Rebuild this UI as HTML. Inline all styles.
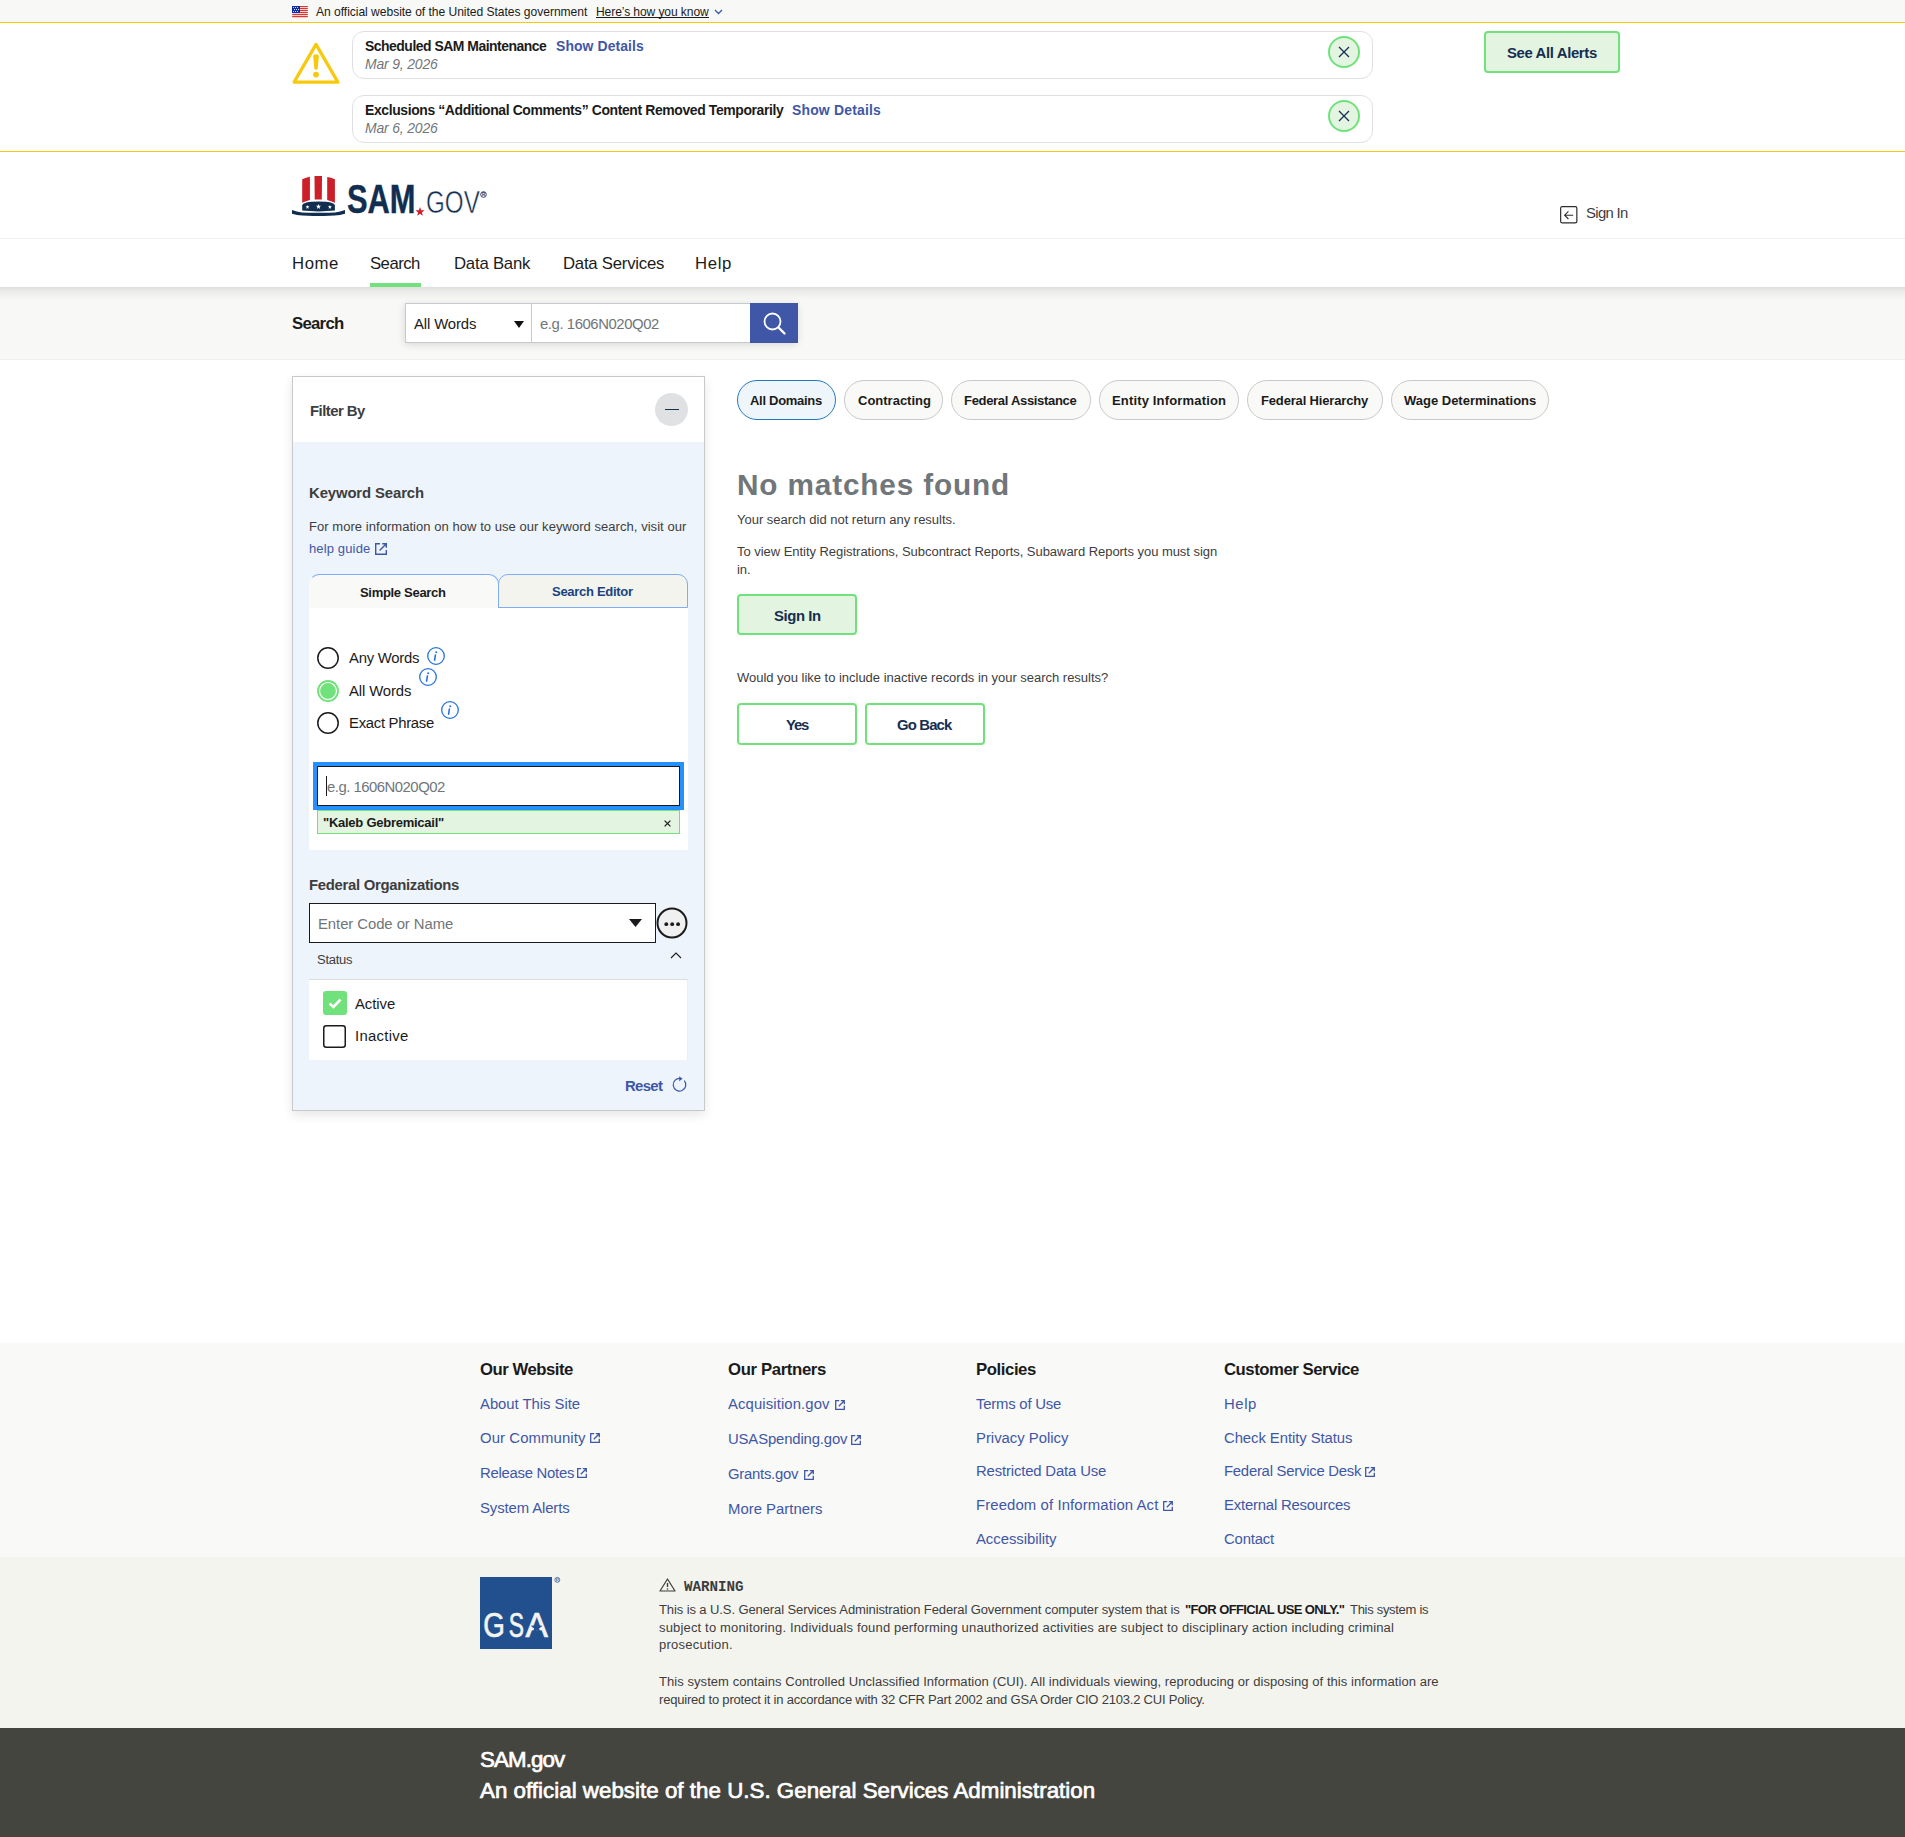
<!DOCTYPE html>
<html><head><meta charset="utf-8"><title>SAM.gov Search</title>
<style>
html,body{margin:0;padding:0;}
body{width:1905px;height:1837px;position:relative;overflow:hidden;background:#fff;font-family:'Liberation Sans', sans-serif;}
span{position:absolute;white-space:nowrap;}
svg{overflow:visible}
</style></head><body>
<div style="position:absolute;left:0px;top:0px;width:1905px;height:22px;background:#f8f8f6"></div>
<div style="position:absolute;left:0px;top:22px;width:1905px;height:1px;background:#f7c90c"></div>
<div style="position:absolute;left:0px;top:151px;width:1905px;height:1px;background:#f7c90c"></div>
<div style="position:absolute;left:0px;top:238px;width:1905px;height:1px;background:#f0f0ec"></div>
<div style="position:absolute;left:0px;top:287px;width:1905px;height:73px;background:linear-gradient(#dededc 0px,#ebebe9 4px,#f8f8f6 13px)"></div>
<div style="position:absolute;left:0px;top:359px;width:1905px;height:1px;background:#f0f0ec"></div>
<div style="position:absolute;left:0px;top:1343px;width:1905px;height:214px;background:#f9f9f7"></div>
<div style="position:absolute;left:0px;top:1557px;width:1905px;height:171px;background:#f4f4ef"></div>
<div style="position:absolute;left:0px;top:1728px;width:1905px;height:109px;background:#454540"></div>
<svg style="position:absolute;left:292px;top:6px;" width="16" height="11" viewBox="0 0 16 11"><rect width="16" height="11" fill="#fff"/><rect x="0" y="0" width="16" height="1.2" fill="#d83933" rx="0.6"/><rect x="0" y="2" width="16" height="1.2" fill="#d83933" rx="0.6"/><rect x="0" y="4" width="16" height="1.2" fill="#d83933" rx="0.6"/><rect x="0" y="6" width="16" height="1.2" fill="#d83933" rx="0.6"/><rect x="0" y="8" width="16" height="1.2" fill="#d83933" rx="0.6"/><rect x="0" y="10" width="16" height="1.2" fill="#d83933" rx="0.6"/><rect x="0" y="0" width="8" height="7" fill="#0b2bab"/><circle cx="1.5" cy="1.5" r="0.55" fill="#fff"/><circle cx="3.5" cy="1.5" r="0.55" fill="#fff"/><circle cx="5.5" cy="1.5" r="0.55" fill="#fff"/><circle cx="2.5" cy="3.5" r="0.55" fill="#fff"/><circle cx="4.5" cy="3.5" r="0.55" fill="#fff"/><circle cx="6.5" cy="3.5" r="0.55" fill="#fff"/><circle cx="1.5" cy="5.5" r="0.55" fill="#fff"/><circle cx="3.5" cy="5.5" r="0.55" fill="#fff"/><circle cx="5.5" cy="5.5" r="0.55" fill="#fff"/></svg>
<div style="position:absolute;left:596px;top:17px;width:113px;height:1px;background:#1b1b1b"></div>
<svg style="position:absolute;left:714px;top:9px;" width="9" height="6" viewBox="0 0 9 6"><path d="M1 1 L4.5 4.5 L8 1" fill="none" stroke="#2f5db3" stroke-width="1.3"/></svg>
<svg style="position:absolute;left:292px;top:42px;" width="48" height="42" viewBox="0 0 48 42"><path d="M24 2.4 L45.9 40.1 L2.1 40.1 Z" fill="none" stroke="#f7c90c" stroke-width="3.2" stroke-linejoin="round"/><path d="M21.2 14.6 Q21.2 12.2 24 12.2 Q26.8 12.2 26.8 14.6 L25.7 26.6 Q25.5 27.8 24 27.8 Q22.5 27.8 22.3 26.6 Z" fill="#f7c90c"/><circle cx="24" cy="32.6" r="2.9" fill="#f7c90c"/></svg>
<div style="position:absolute;left:352px;top:31px;width:1019px;height:46px;border:1px solid #e0e0e0;border-radius:12px;background:#fff"></div>
<div style="position:absolute;left:1328px;top:36px;width:28px;height:28px;border:2px solid #70e17b;border-radius:50%;background:#e3f5e1"></div>
<svg style="position:absolute;left:1338px;top:46px;" width="12" height="12" viewBox="0 0 12 12"><path d="M1 1 L11 11 M11 1 L1 11" stroke="#162e51" stroke-width="1.3"/></svg>
<div style="position:absolute;left:352px;top:95px;width:1019px;height:46px;border:1px solid #e0e0e0;border-radius:12px;background:#fff"></div>
<div style="position:absolute;left:1328px;top:100px;width:28px;height:28px;border:2px solid #70e17b;border-radius:50%;background:#e3f5e1"></div>
<svg style="position:absolute;left:1338px;top:110px;" width="12" height="12" viewBox="0 0 12 12"><path d="M1 1 L11 11 M11 1 L1 11" stroke="#162e51" stroke-width="1.3"/></svg>
<div style="position:absolute;left:1484px;top:31px;width:132px;height:38px;border:2px solid #70e17b;border-radius:4px;background:#e3f5e1"></div>
<svg style="position:absolute;left:288px;top:170px;" width="72" height="52" viewBox="0 0 72 52">
<path d="M14.2 9.2 Q18 7.5 21.9 6.8 L21.9 30 Q18 31 14.2 32.7 Z" fill="#cd1f2a"/>
<path d="M26.5 5.9 L34 5.9 L33.8 29.6 Q30.2 29.2 26.7 29.6 Z" fill="#cd1f2a"/>
<path d="M39.2 7 Q43 7.5 46.9 9.2 L46.9 32.7 Q43 31 39.2 30 Z" fill="#cd1f2a"/>
<path d="M14.2 35.6 Q14.5 31.4 30.5 31.4 Q46.6 31.4 46.9 35.6 L46.9 40.6 Q30.5 42.2 14.2 40.6 Z" fill="#112e51"/>
<path d="M4 39.9 C12 43.3, 22 42.8, 30.5 42.8 C39 42.8, 49 43.3, 57 39.9 L57 43.8 C49 46.2, 39 45.9, 30.5 45.9 C22 45.9, 12 46.2, 4 43.8 Z" fill="#112e51"/>
<path d="M19.50 34.90 L20.02 36.29 L21.50 36.35 L20.34 37.27 L20.73 38.70 L19.50 37.88 L18.27 38.70 L18.66 37.27 L17.50 36.35 L18.98 36.29 Z" fill="#fff"/><path d="M30.50 34.00 L31.17 35.78 L33.07 35.87 L31.58 37.05 L32.09 38.88 L30.50 37.83 L28.91 38.88 L29.42 37.05 L27.93 35.87 L29.83 35.78 Z" fill="#fff"/><path d="M41.90 34.90 L42.42 36.29 L43.90 36.35 L42.74 37.27 L43.13 38.70 L41.90 37.88 L40.67 38.70 L41.06 37.27 L39.90 36.35 L41.38 36.29 Z" fill="#fff"/></svg>
<svg style="position:absolute;left:415px;top:207px;" width="10" height="9" viewBox="0 0 10 9"><path d="M5.00 0.00 L6.18 3.17 L9.57 3.32 L6.92 5.42 L7.82 8.68 L5.00 6.82 L2.18 8.68 L3.08 5.42 L0.43 3.32 L3.82 3.17 Z" fill="#d0202f"/></svg>
<svg style="position:absolute;left:480px;top:191px;" width="8" height="8" viewBox="0 0 8 8"><circle cx="3.5" cy="3.5" r="2.8" fill="none" stroke="#112e51" stroke-width="0.9"/><text x="3.5" y="5.2" font-size="4.5" font-family="Liberation Sans" font-weight="700" text-anchor="middle" fill="#112e51">R</text></svg>
<svg style="position:absolute;left:1560px;top:206px;" width="18" height="18" viewBox="0 0 18 18"><rect x="0.65" y="0.65" width="16.2" height="16.2" rx="1.6" fill="none" stroke="#2d2d2d" stroke-width="1.2"/><path d="M13.2 9.2 L4.6 9.2 M8.4 5.4 L4.6 9.2 L8.4 13" fill="none" stroke="#2d2d2d" stroke-width="1.1"/></svg>
<div style="position:absolute;left:370px;top:283px;width:51px;height:4px;background:#70e17b"></div>
<div style="position:absolute;left:405px;top:303px;width:392px;height:39px;box-shadow:0 2px 8px rgba(0,0,0,0.15)"></div>
<div style="position:absolute;left:405px;top:303px;width:125px;height:38px;background:#fff;border:1px solid #c6cace"></div>
<svg style="position:absolute;left:514px;top:321px;" width="10" height="7" viewBox="0 0 10 7"><path d="M0 0 L10 0 L5 7 Z" fill="#111"/></svg>
<div style="position:absolute;left:532px;top:303px;width:218px;height:38px;background:#fff;border:1px solid #c6cace;border-left:none"></div>
<div style="position:absolute;left:750px;top:303px;width:48px;height:40px;background:#3f57a6"></div>
<svg style="position:absolute;left:760px;top:310px;" width="28" height="28" viewBox="0 0 28 28"><circle cx="12.5" cy="11.5" r="8" fill="none" stroke="#fff" stroke-width="1.8"/><path d="M18.5 17.5 L24.5 23.5" stroke="#fff" stroke-width="2.4" stroke-linecap="round"/></svg>
<div style="position:absolute;left:292px;top:376px;width:411px;height:733px;border:1px solid #c9c9c9;background:#edf4fb;box-shadow:0 4px 10px rgba(0,0,0,0.10)"></div>
<div style="position:absolute;left:293px;top:377px;width:411px;height:65px;background:#fff"></div>
<div style="position:absolute;left:655px;top:393px;width:33px;height:33px;border-radius:50%;background:#dfe1e2"></div>
<div style="position:absolute;left:665px;top:409px;width:14px;height:1.4px;background:#162e51"></div>
<svg style="position:absolute;left:375px;top:543px;" width="12" height="12" viewBox="0 0 12 12"><path d="M5.0 0.7 L0.7 0.7 L0.7 11.3 L11.3 11.3 L11.3 7.0" fill="none" stroke="#3f57a6" stroke-width="1.4"/><path d="M4.6 7.4 L11.3 0.7 M7.2 0.7 L11.3 0.7 L11.3 4.8" fill="none" stroke="#3f57a6" stroke-width="1.4"/></svg>
<div style="position:absolute;left:309px;top:574px;width:190px;height:34px;background:#f9f9f7;border:1px solid #7fadf7;border-left-color:transparent;border-bottom:none;border-radius:10px 10px 0 0;box-sizing:border-box"></div>
<div style="position:absolute;left:498px;top:574px;width:190px;height:34px;background:#f3f4ee;border:1px solid #7fadf7;border-radius:10px 10px 0 0;box-sizing:border-box"></div>
<div style="position:absolute;left:309px;top:608px;width:379px;height:242px;background:#fff"></div>
<svg style="position:absolute;left:317px;top:647px;" width="22" height="22" viewBox="0 0 22 22"><circle cx="11" cy="11" r="10.2" fill="#fff" stroke="#1b1b1b" stroke-width="1.5"/></svg>
<svg style="position:absolute;left:317px;top:680px;" width="22" height="22" viewBox="0 0 22 22"><circle cx="11" cy="11" r="10.2" fill="#70e17b" stroke="#70e17b" stroke-width="1.5"/><circle cx="11" cy="11" r="8.5" fill="none" stroke="#fff" stroke-width="1.2"/></svg>
<svg style="position:absolute;left:317px;top:712px;" width="22" height="22" viewBox="0 0 22 22"><circle cx="11" cy="11" r="10.2" fill="#fff" stroke="#1b1b1b" stroke-width="1.5"/></svg>
<svg style="position:absolute;left:427px;top:647px;" width="18" height="18" viewBox="0 0 18 18"><circle cx="9" cy="9" r="8.3" fill="none" stroke="#2672de" stroke-width="1.3"/><path d="M8.4 8 L7.6 13.2" stroke="#2672de" stroke-width="1.6" stroke-linecap="round"/><circle cx="9.2" cy="5.2" r="1" fill="#2672de"/></svg>
<svg style="position:absolute;left:419px;top:668px;" width="18" height="18" viewBox="0 0 18 18"><circle cx="9" cy="9" r="8.3" fill="none" stroke="#2672de" stroke-width="1.3"/><path d="M8.4 8 L7.6 13.2" stroke="#2672de" stroke-width="1.6" stroke-linecap="round"/><circle cx="9.2" cy="5.2" r="1" fill="#2672de"/></svg>
<svg style="position:absolute;left:441px;top:701px;" width="18" height="18" viewBox="0 0 18 18"><circle cx="9" cy="9" r="8.3" fill="none" stroke="#2672de" stroke-width="1.3"/><path d="M8.4 8 L7.6 13.2" stroke="#2672de" stroke-width="1.6" stroke-linecap="round"/><circle cx="9.2" cy="5.2" r="1" fill="#2672de"/></svg>
<div style="position:absolute;left:313px;top:762px;width:371px;height:48px;background:#2491ff"></div>
<div style="position:absolute;left:317px;top:766px;width:363px;height:40px;background:#fff;border:1px solid #1b1b1b;box-sizing:border-box"></div>
<div style="position:absolute;left:326px;top:776px;width:1px;height:20px;background:#1b1b1b"></div>
<div style="position:absolute;left:317px;top:810px;width:363px;height:24px;background:#e3f5e1;border:1px solid #70e17b;box-sizing:border-box"></div>
<svg style="position:absolute;left:663.5px;top:819.5px;" width="7" height="7" viewBox="0 0 7 7"><path d="M0.6 0.6 L6.4 6.4 M6.4 0.6 L0.6 6.4" stroke="#1b1b1b" stroke-width="1.25"/></svg>
<div style="position:absolute;left:309px;top:903px;width:347px;height:40px;background:#fff;border:1px solid #1b1b1b;box-sizing:border-box"></div>
<svg style="position:absolute;left:629px;top:919px;" width="13" height="8" viewBox="0 0 13 8"><path d="M0 0 L13 0 L6.5 8 Z" fill="#1b1b1b"/></svg>
<svg style="position:absolute;left:656px;top:907px;" width="32" height="32" viewBox="0 0 32 32"><circle cx="16" cy="16" r="14.5" fill="#f0f0f0" stroke="#1b1b1b" stroke-width="2"/><circle cx="10.3" cy="17.2" r="1.9" fill="#1b1b1b"/><circle cx="16.2" cy="17.2" r="1.9" fill="#1b1b1b"/><circle cx="22.1" cy="17.2" r="1.9" fill="#1b1b1b"/></svg>
<svg style="position:absolute;left:670px;top:952px;" width="12" height="7" viewBox="0 0 12 7"><path d="M1 6 L6 1 L11 6" fill="none" stroke="#1b1b1b" stroke-width="1.1"/></svg>
<div style="position:absolute;left:309px;top:979px;width:379px;height:81px;background:#fff;border-top:1px solid #dcdcdc;border-right:1px solid #eeeeee;box-sizing:border-box"></div>
<svg style="position:absolute;left:323px;top:991px;" width="24" height="24" viewBox="0 0 24 24"><rect width="24" height="24" rx="3" fill="#70e17b"/><path d="M6.5 12.5 L10.5 16 L17.5 8.5" fill="none" stroke="#fff" stroke-width="2.6"/></svg>
<svg style="position:absolute;left:323px;top:1025px;" width="22" height="22" viewBox="0 0 22 22"><rect x="0.75" y="0.75" width="21.5" height="21.5" rx="2.5" fill="#fff" stroke="#1b1b1b" stroke-width="1.5"/></svg>
<svg style="position:absolute;left:671px;top:1076px;" width="17" height="17" viewBox="0 0 17 17"><path d="M13.3 4.6 A6.3 6.3 0 1 1 9.6 2.5" fill="none" stroke="#3f57a6" stroke-width="1.25"/><path d="M8.2 0.2 L11.6 2.7 L8.2 5.2 Z" fill="#3f57a6"/></svg>
<div style="position:absolute;left:737px;top:380px;width:99px;height:40px;border:1.5px solid #2378c3;border-radius:20px;background:#eff6fb;box-sizing:border-box"></div>
<div style="position:absolute;left:844px;top:380px;width:99px;height:40px;border:1px solid #c9c9c9;border-radius:20px;background:#f9f9f7;box-sizing:border-box"></div>
<div style="position:absolute;left:951px;top:380px;width:140px;height:40px;border:1px solid #c9c9c9;border-radius:20px;background:#f9f9f7;box-sizing:border-box"></div>
<div style="position:absolute;left:1099px;top:380px;width:140px;height:40px;border:1px solid #c9c9c9;border-radius:20px;background:#f9f9f7;box-sizing:border-box"></div>
<div style="position:absolute;left:1247px;top:380px;width:136px;height:40px;border:1px solid #c9c9c9;border-radius:20px;background:#f9f9f7;box-sizing:border-box"></div>
<div style="position:absolute;left:1391px;top:380px;width:158px;height:40px;border:1px solid #c9c9c9;border-radius:20px;background:#f9f9f7;box-sizing:border-box"></div>
<div style="position:absolute;left:737px;top:594px;width:120px;height:41px;background:#e3f5e1;border:2px solid #70e17b;border-radius:4px;box-sizing:border-box"></div>
<div style="position:absolute;left:737px;top:703px;width:120px;height:42px;background:#fff;border:2px solid #70e17b;border-radius:4px;box-sizing:border-box"></div>
<div style="position:absolute;left:865px;top:703px;width:120px;height:42px;background:#fff;border:2px solid #70e17b;border-radius:4px;box-sizing:border-box"></div>
<svg style="position:absolute;left:590px;top:1433px;" width="10" height="10" viewBox="0 0 10 10"><path d="M4.2 0.7 L0.7 0.7 L0.7 9.3 L9.3 9.3 L9.3 5.8" fill="none" stroke="#3f57a6" stroke-width="1.3"/><path d="M3.8 6.2 L9 1 M5.8 0.7 L9.3 0.7 L9.3 4.2" fill="none" stroke="#3f57a6" stroke-width="1.3"/></svg>
<svg style="position:absolute;left:577px;top:1468px;" width="10" height="10" viewBox="0 0 10 10"><path d="M4.2 0.7 L0.7 0.7 L0.7 9.3 L9.3 9.3 L9.3 5.8" fill="none" stroke="#3f57a6" stroke-width="1.3"/><path d="M3.8 6.2 L9 1 M5.8 0.7 L9.3 0.7 L9.3 4.2" fill="none" stroke="#3f57a6" stroke-width="1.3"/></svg>
<svg style="position:absolute;left:834.5px;top:1400px;" width="10" height="10" viewBox="0 0 10 10"><path d="M4.2 0.7 L0.7 0.7 L0.7 9.3 L9.3 9.3 L9.3 5.8" fill="none" stroke="#3f57a6" stroke-width="1.3"/><path d="M3.8 6.2 L9 1 M5.8 0.7 L9.3 0.7 L9.3 4.2" fill="none" stroke="#3f57a6" stroke-width="1.3"/></svg>
<svg style="position:absolute;left:851px;top:1435px;" width="10" height="10" viewBox="0 0 10 10"><path d="M4.2 0.7 L0.7 0.7 L0.7 9.3 L9.3 9.3 L9.3 5.8" fill="none" stroke="#3f57a6" stroke-width="1.3"/><path d="M3.8 6.2 L9 1 M5.8 0.7 L9.3 0.7 L9.3 4.2" fill="none" stroke="#3f57a6" stroke-width="1.3"/></svg>
<svg style="position:absolute;left:803.5px;top:1470px;" width="10" height="10" viewBox="0 0 10 10"><path d="M4.2 0.7 L0.7 0.7 L0.7 9.3 L9.3 9.3 L9.3 5.8" fill="none" stroke="#3f57a6" stroke-width="1.3"/><path d="M3.8 6.2 L9 1 M5.8 0.7 L9.3 0.7 L9.3 4.2" fill="none" stroke="#3f57a6" stroke-width="1.3"/></svg>
<svg style="position:absolute;left:1163px;top:1501px;" width="10" height="10" viewBox="0 0 10 10"><path d="M4.2 0.7 L0.7 0.7 L0.7 9.3 L9.3 9.3 L9.3 5.8" fill="none" stroke="#3f57a6" stroke-width="1.3"/><path d="M3.8 6.2 L9 1 M5.8 0.7 L9.3 0.7 L9.3 4.2" fill="none" stroke="#3f57a6" stroke-width="1.3"/></svg>
<svg style="position:absolute;left:1364.5px;top:1467px;" width="10" height="10" viewBox="0 0 10 10"><path d="M4.2 0.7 L0.7 0.7 L0.7 9.3 L9.3 9.3 L9.3 5.8" fill="none" stroke="#3f57a6" stroke-width="1.3"/><path d="M3.8 6.2 L9 1 M5.8 0.7 L9.3 0.7 L9.3 4.2" fill="none" stroke="#3f57a6" stroke-width="1.3"/></svg>
<svg style="position:absolute;left:480px;top:1577px;" width="82" height="72" viewBox="0 0 82 72"><rect width="72" height="72" fill="#22508f"/><g font-family="Liberation Sans" font-size="35.5" fill="#f4f4ef" stroke="#f4f4ef" stroke-width="0.7"><text x="3.3" y="60.4" textLength="21.6" lengthAdjust="spacingAndGlyphs">G</text><text x="28.8" y="60.4" textLength="15.2" lengthAdjust="spacingAndGlyphs">S</text><text x="45.4" y="60.4" textLength="22.4" lengthAdjust="spacingAndGlyphs">A</text></g><path d="M56.60 44.40 L58.13 48.49 L62.50 48.68 L59.08 51.40 L60.24 55.62 L56.60 53.20 L52.96 55.62 L54.12 51.40 L50.70 48.68 L55.07 48.49 Z" fill="#22508f"/><circle cx="77.3" cy="2.9" r="2.5" fill="none" stroke="#22508f" stroke-width="0.7"/><path d="M76.4 4.5 L76.4 1.4 L77.8 1.4 Q78.6 1.4 78.6 2.2 Q78.6 3 77.8 3 L76.4 3 M77.6 3 L78.6 4.5" fill="none" stroke="#22508f" stroke-width="0.5"/></svg>
<svg style="position:absolute;left:659px;top:1578px;" width="17" height="14" viewBox="0 0 17 14"><path d="M8.5 1 L16 13 L1 13 Z" fill="none" stroke="#3d3d3d" stroke-width="1.2" stroke-linejoin="round"/><path d="M8.5 5 L8.5 9" stroke="#3d3d3d" stroke-width="1.4"/><circle cx="8.5" cy="11" r="0.8" fill="#3d3d3d"/></svg>
<span id="t0" style="left:316px;top:6.00px;font-size:12.09px;line-height:12.09px;font-weight:400;color:#1b1b1b;font-style:normal;letter-spacing:-0.034px;font-family:'Liberation Sans', sans-serif;">An official website of the United States government</span>
<span id="t1" style="left:596px;top:6.00px;font-size:12.09px;line-height:12.09px;font-weight:400;color:#1b1b1b;font-style:normal;letter-spacing:-0.103px;font-family:'Liberation Sans', sans-serif;">Here’s how you know</span>
<span id="t2" style="left:365px;top:40.00px;font-size:13.95px;line-height:13.95px;font-weight:700;color:#1b1b1b;font-style:normal;letter-spacing:-0.494px;font-family:'Liberation Sans', sans-serif;">Scheduled SAM Maintenance</span>
<span id="t3" style="left:556px;top:40.00px;font-size:13.95px;line-height:13.95px;font-weight:700;color:#3f57a6;font-style:normal;letter-spacing:0.092px;font-family:'Liberation Sans', sans-serif;">Show Details</span>
<span id="t4" style="left:365px;top:58.00px;font-size:13.95px;line-height:13.95px;font-weight:400;color:#71767a;font-style:italic;letter-spacing:-0.163px;font-family:'Liberation Sans', sans-serif;">Mar 9, 2026</span>
<span id="t5" style="left:365px;top:104.00px;font-size:13.95px;line-height:13.95px;font-weight:700;color:#1b1b1b;font-style:normal;letter-spacing:-0.380px;font-family:'Liberation Sans', sans-serif;">Exclusions “Additional Comments” Content Removed Temporarily</span>
<span id="t6" style="left:792px;top:104.00px;font-size:13.95px;line-height:13.95px;font-weight:700;color:#3f57a6;font-style:normal;letter-spacing:0.183px;font-family:'Liberation Sans', sans-serif;">Show Details</span>
<span id="t7" style="left:365px;top:122.00px;font-size:13.95px;line-height:13.95px;font-weight:400;color:#71767a;font-style:italic;letter-spacing:-0.163px;font-family:'Liberation Sans', sans-serif;">Mar 6, 2026</span>
<span id="t8" style="left:1507px;top:46.00px;font-size:14.88px;line-height:14.88px;font-weight:700;color:#162e51;font-style:normal;letter-spacing:-0.356px;font-family:'Liberation Sans', sans-serif;">See All Alerts</span>
<span id="t9" style="left:347px;top:179.00px;font-size:40.0px;line-height:40.0px;font-weight:700;color:#112e51;font-style:normal;letter-spacing:0.000px;font-family:'Liberation Sans', sans-serif;-webkit-text-stroke:0.4px #112e51;transform:scaleX(0.7710);transform-origin:0 0">SAM</span>
<span id="t10" style="left:426px;top:187.00px;font-size:30.5px;line-height:30.5px;font-weight:400;color:#112e51;font-style:normal;letter-spacing:0.000px;font-family:'Liberation Sans', sans-serif;-webkit-text-stroke:0.5px #fff;transform:scaleX(0.7930);transform-origin:0 0">GOV</span>
<span id="t11" style="left:1586px;top:206.00px;font-size:14.88px;line-height:14.88px;font-weight:400;color:#3d3d3d;font-style:normal;letter-spacing:-0.673px;font-family:'Liberation Sans', sans-serif;">Sign In</span>
<span id="t12" style="left:292px;top:256.00px;font-size:16.74px;line-height:16.74px;font-weight:400;color:#1b1b1b;font-style:normal;letter-spacing:0.556px;font-family:'Liberation Sans', sans-serif;">Home</span>
<span id="t13" style="left:370px;top:256.00px;font-size:16.74px;line-height:16.74px;font-weight:400;color:#1b1b1b;font-style:normal;letter-spacing:-0.543px;font-family:'Liberation Sans', sans-serif;">Search</span>
<span id="t14" style="left:454px;top:256.00px;font-size:16.74px;line-height:16.74px;font-weight:400;color:#1b1b1b;font-style:normal;letter-spacing:-0.222px;font-family:'Liberation Sans', sans-serif;">Data Bank</span>
<span id="t15" style="left:563px;top:256.00px;font-size:16.74px;line-height:16.74px;font-weight:400;color:#1b1b1b;font-style:normal;letter-spacing:-0.233px;font-family:'Liberation Sans', sans-serif;">Data Services</span>
<span id="t16" style="left:695px;top:256.00px;font-size:16.74px;line-height:16.74px;font-weight:400;color:#1b1b1b;font-style:normal;letter-spacing:0.630px;font-family:'Liberation Sans', sans-serif;">Help</span>
<span id="t17" style="left:292px;top:316.00px;font-size:16.74px;line-height:16.74px;font-weight:700;color:#1b1b1b;font-style:normal;letter-spacing:-0.719px;font-family:'Liberation Sans', sans-serif;">Search</span>
<span id="t18" style="left:414px;top:317.00px;font-size:14.88px;line-height:14.88px;font-weight:400;color:#1b1b1b;font-style:normal;letter-spacing:-0.117px;font-family:'Liberation Sans', sans-serif;">All Words</span>
<span id="t19" style="left:540px;top:317.00px;font-size:14.88px;line-height:14.88px;font-weight:400;color:#71767a;font-style:normal;letter-spacing:-0.429px;font-family:'Liberation Sans', sans-serif;">e.g. 1606N020Q02</span>
<span id="t20" style="left:310px;top:404.00px;font-size:14.88px;line-height:14.88px;font-weight:700;color:#3d3d3d;font-style:normal;letter-spacing:-0.530px;font-family:'Liberation Sans', sans-serif;">Filter By</span>
<span id="t21" style="left:309px;top:486.00px;font-size:14.88px;line-height:14.88px;font-weight:700;color:#3d3d3d;font-style:normal;letter-spacing:-0.114px;font-family:'Liberation Sans', sans-serif;">Keyword Search</span>
<span id="t22" style="left:309px;top:520.00px;font-size:13.02px;line-height:13.02px;font-weight:400;color:#3d3d3d;font-style:normal;letter-spacing:0.041px;font-family:'Liberation Sans', sans-serif;">For more information on how to use our keyword search, visit our</span>
<span id="t23" style="left:309px;top:542.00px;font-size:13.02px;line-height:13.02px;font-weight:400;color:#3f57a6;font-style:normal;letter-spacing:0.130px;font-family:'Liberation Sans', sans-serif;">help guide</span>
<span id="t24" style="left:360px;top:586.00px;font-size:13.02px;line-height:13.02px;font-weight:700;color:#1b1b1b;font-style:normal;letter-spacing:-0.313px;font-family:'Liberation Sans', sans-serif;">Simple Search</span>
<span id="t25" style="left:552px;top:585.00px;font-size:13.02px;line-height:13.02px;font-weight:700;color:#1a4480;font-style:normal;letter-spacing:-0.297px;font-family:'Liberation Sans', sans-serif;">Search Editor</span>
<span id="t26" style="left:349px;top:651.00px;font-size:14.88px;line-height:14.88px;font-weight:400;color:#1b1b1b;font-style:normal;letter-spacing:-0.254px;font-family:'Liberation Sans', sans-serif;">Any Words</span>
<span id="t27" style="left:349px;top:684.00px;font-size:14.88px;line-height:14.88px;font-weight:400;color:#1b1b1b;font-style:normal;letter-spacing:-0.117px;font-family:'Liberation Sans', sans-serif;">All Words</span>
<span id="t28" style="left:349px;top:716.00px;font-size:14.88px;line-height:14.88px;font-weight:400;color:#1b1b1b;font-style:normal;letter-spacing:-0.290px;font-family:'Liberation Sans', sans-serif;">Exact Phrase</span>
<span id="t29" style="left:327px;top:780.00px;font-size:14.88px;line-height:14.88px;font-weight:400;color:#71767a;font-style:normal;letter-spacing:-0.496px;font-family:'Liberation Sans', sans-serif;">e.g. 1606N020Q02</span>
<span id="t30" style="left:323px;top:816.00px;font-size:13.02px;line-height:13.02px;font-weight:700;color:#1b1b1b;font-style:normal;letter-spacing:-0.264px;font-family:'Liberation Sans', sans-serif;">"Kaleb Gebremicail"</span>
<span id="t31" style="left:309px;top:878.00px;font-size:14.88px;line-height:14.88px;font-weight:700;color:#3d3d3d;font-style:normal;letter-spacing:-0.298px;font-family:'Liberation Sans', sans-serif;">Federal Organizations</span>
<span id="t32" style="left:318px;top:917.00px;font-size:14.88px;line-height:14.88px;font-weight:400;color:#71767a;font-style:normal;letter-spacing:-0.067px;font-family:'Liberation Sans', sans-serif;">Enter Code or Name</span>
<span id="t33" style="left:317px;top:953.00px;font-size:13.02px;line-height:13.02px;font-weight:400;color:#3d3d3d;font-style:normal;letter-spacing:-0.278px;font-family:'Liberation Sans', sans-serif;">Status</span>
<span id="t34" style="left:355px;top:997.00px;font-size:14.88px;line-height:14.88px;font-weight:400;color:#1b1b1b;font-style:normal;letter-spacing:-0.047px;font-family:'Liberation Sans', sans-serif;">Active</span>
<span id="t35" style="left:355px;top:1029.00px;font-size:14.88px;line-height:14.88px;font-weight:400;color:#1b1b1b;font-style:normal;letter-spacing:0.287px;font-family:'Liberation Sans', sans-serif;">Inactive</span>
<span id="t36" style="left:625px;top:1079.00px;font-size:14.88px;line-height:14.88px;font-weight:700;color:#3f57a6;font-style:normal;letter-spacing:-0.640px;font-family:'Liberation Sans', sans-serif;">Reset</span>
<span id="t37" style="left:750px;top:394.00px;font-size:13.02px;line-height:13.02px;font-weight:700;color:#1b1b1b;font-style:normal;letter-spacing:-0.298px;font-family:'Liberation Sans', sans-serif;">All Domains</span>
<span id="t38" style="left:858px;top:394.00px;font-size:13.02px;line-height:13.02px;font-weight:700;color:#1b1b1b;font-style:normal;letter-spacing:-0.008px;font-family:'Liberation Sans', sans-serif;">Contracting</span>
<span id="t39" style="left:964px;top:394.00px;font-size:13.02px;line-height:13.02px;font-weight:700;color:#1b1b1b;font-style:normal;letter-spacing:-0.318px;font-family:'Liberation Sans', sans-serif;">Federal Assistance</span>
<span id="t40" style="left:1112px;top:394.00px;font-size:13.02px;line-height:13.02px;font-weight:700;color:#1b1b1b;font-style:normal;letter-spacing:0.153px;font-family:'Liberation Sans', sans-serif;">Entity Information</span>
<span id="t41" style="left:1261px;top:394.00px;font-size:13.02px;line-height:13.02px;font-weight:700;color:#1b1b1b;font-style:normal;letter-spacing:-0.170px;font-family:'Liberation Sans', sans-serif;">Federal Hierarchy</span>
<span id="t42" style="left:1404px;top:394.00px;font-size:13.02px;line-height:13.02px;font-weight:700;color:#1b1b1b;font-style:normal;letter-spacing:-0.020px;font-family:'Liberation Sans', sans-serif;">Wage Determinations</span>
<span id="t43" style="left:737px;top:470.00px;font-size:29.76px;line-height:29.76px;font-weight:700;color:#71767a;font-style:normal;letter-spacing:0.845px;font-family:'Liberation Sans', sans-serif;">No matches found</span>
<span id="t44" style="left:737px;top:513.00px;font-size:13.02px;line-height:13.02px;font-weight:400;color:#3d3d3d;font-style:normal;letter-spacing:-0.022px;font-family:'Liberation Sans', sans-serif;">Your search did not return any results.</span>
<span id="t45" style="left:737px;top:545.00px;font-size:13.02px;line-height:13.02px;font-weight:400;color:#3d3d3d;font-style:normal;letter-spacing:-0.047px;font-family:'Liberation Sans', sans-serif;">To view Entity Registrations, Subcontract Reports, Subaward Reports you must sign</span>
<span id="t46" style="left:737px;top:563.00px;font-size:13.02px;line-height:13.02px;font-weight:400;color:#3d3d3d;font-style:normal;letter-spacing:-0.065px;font-family:'Liberation Sans', sans-serif;">in.</span>
<span id="t47" style="left:774px;top:609.00px;font-size:14.88px;line-height:14.88px;font-weight:700;color:#162e51;font-style:normal;letter-spacing:-0.415px;font-family:'Liberation Sans', sans-serif;">Sign In</span>
<span id="t48" style="left:737px;top:671.00px;font-size:13.02px;line-height:13.02px;font-weight:400;color:#3d3d3d;font-style:normal;letter-spacing:-0.028px;font-family:'Liberation Sans', sans-serif;">Would you like to include inactive records in your search results?</span>
<span id="t49" style="left:786px;top:718.00px;font-size:14.88px;line-height:14.88px;font-weight:700;color:#162e51;font-style:normal;letter-spacing:-1.187px;font-family:'Liberation Sans', sans-serif;">Yes</span>
<span id="t50" style="left:897px;top:718.00px;font-size:14.88px;line-height:14.88px;font-weight:700;color:#162e51;font-style:normal;letter-spacing:-0.846px;font-family:'Liberation Sans', sans-serif;">Go Back</span>
<span id="t51" style="left:480px;top:1362.00px;font-size:16.74px;line-height:16.74px;font-weight:700;color:#1b1b1b;font-style:normal;letter-spacing:-0.495px;font-family:'Liberation Sans', sans-serif;">Our Website</span>
<span id="t52" style="left:728px;top:1362.00px;font-size:16.74px;line-height:16.74px;font-weight:700;color:#1b1b1b;font-style:normal;letter-spacing:-0.363px;font-family:'Liberation Sans', sans-serif;">Our Partners</span>
<span id="t53" style="left:976px;top:1362.00px;font-size:16.74px;line-height:16.74px;font-weight:700;color:#1b1b1b;font-style:normal;letter-spacing:-0.421px;font-family:'Liberation Sans', sans-serif;">Policies</span>
<span id="t54" style="left:1224px;top:1362.00px;font-size:16.74px;line-height:16.74px;font-weight:700;color:#1b1b1b;font-style:normal;letter-spacing:-0.467px;font-family:'Liberation Sans', sans-serif;">Customer Service</span>
<span id="t55" style="left:480px;top:1397.00px;font-size:14.88px;line-height:14.88px;font-weight:400;color:#3f57a6;font-style:normal;letter-spacing:-0.043px;font-family:'Liberation Sans', sans-serif;">About This Site</span>
<span id="t56" style="left:480px;top:1431.00px;font-size:14.88px;line-height:14.88px;font-weight:400;color:#3f57a6;font-style:normal;letter-spacing:0.108px;font-family:'Liberation Sans', sans-serif;">Our Community</span>
<span id="t57" style="left:480px;top:1466.00px;font-size:14.88px;line-height:14.88px;font-weight:400;color:#3f57a6;font-style:normal;letter-spacing:-0.261px;font-family:'Liberation Sans', sans-serif;">Release Notes</span>
<span id="t58" style="left:480px;top:1501.00px;font-size:14.88px;line-height:14.88px;font-weight:400;color:#3f57a6;font-style:normal;letter-spacing:-0.109px;font-family:'Liberation Sans', sans-serif;">System Alerts</span>
<span id="t59" style="left:728px;top:1397.00px;font-size:14.88px;line-height:14.88px;font-weight:400;color:#3f57a6;font-style:normal;letter-spacing:0.099px;font-family:'Liberation Sans', sans-serif;">Acquisition.gov</span>
<span id="t60" style="left:728px;top:1432.00px;font-size:14.88px;line-height:14.88px;font-weight:400;color:#3f57a6;font-style:normal;letter-spacing:-0.152px;font-family:'Liberation Sans', sans-serif;">USASpending.gov</span>
<span id="t61" style="left:728px;top:1467.00px;font-size:14.88px;line-height:14.88px;font-weight:400;color:#3f57a6;font-style:normal;letter-spacing:-0.258px;font-family:'Liberation Sans', sans-serif;">Grants.gov</span>
<span id="t62" style="left:728px;top:1502.00px;font-size:14.88px;line-height:14.88px;font-weight:400;color:#3f57a6;font-style:normal;letter-spacing:0.016px;font-family:'Liberation Sans', sans-serif;">More Partners</span>
<span id="t63" style="left:976px;top:1397.00px;font-size:14.88px;line-height:14.88px;font-weight:400;color:#3f57a6;font-style:normal;letter-spacing:-0.213px;font-family:'Liberation Sans', sans-serif;">Terms of Use</span>
<span id="t64" style="left:976px;top:1431.00px;font-size:14.88px;line-height:14.88px;font-weight:400;color:#3f57a6;font-style:normal;letter-spacing:-0.011px;font-family:'Liberation Sans', sans-serif;">Privacy Policy</span>
<span id="t65" style="left:976px;top:1464.00px;font-size:14.88px;line-height:14.88px;font-weight:400;color:#3f57a6;font-style:normal;letter-spacing:-0.157px;font-family:'Liberation Sans', sans-serif;">Restricted Data Use</span>
<span id="t66" style="left:976px;top:1498.00px;font-size:14.88px;line-height:14.88px;font-weight:400;color:#3f57a6;font-style:normal;letter-spacing:0.116px;font-family:'Liberation Sans', sans-serif;">Freedom of Information Act</span>
<span id="t67" style="left:976px;top:1532.00px;font-size:14.88px;line-height:14.88px;font-weight:400;color:#3f57a6;font-style:normal;letter-spacing:-0.047px;font-family:'Liberation Sans', sans-serif;">Accessibility</span>
<span id="t68" style="left:1224px;top:1397.00px;font-size:14.88px;line-height:14.88px;font-weight:400;color:#3f57a6;font-style:normal;letter-spacing:0.560px;font-family:'Liberation Sans', sans-serif;">Help</span>
<span id="t69" style="left:1224px;top:1431.00px;font-size:14.88px;line-height:14.88px;font-weight:400;color:#3f57a6;font-style:normal;letter-spacing:-0.076px;font-family:'Liberation Sans', sans-serif;">Check Entity Status</span>
<span id="t70" style="left:1224px;top:1464.00px;font-size:14.88px;line-height:14.88px;font-weight:400;color:#3f57a6;font-style:normal;letter-spacing:-0.250px;font-family:'Liberation Sans', sans-serif;">Federal Service Desk</span>
<span id="t71" style="left:1224px;top:1498.00px;font-size:14.88px;line-height:14.88px;font-weight:400;color:#3f57a6;font-style:normal;letter-spacing:-0.198px;font-family:'Liberation Sans', sans-serif;">External Resources</span>
<span id="t72" style="left:1224px;top:1532.00px;font-size:14.88px;line-height:14.88px;font-weight:400;color:#3f57a6;font-style:normal;letter-spacing:-0.188px;font-family:'Liberation Sans', sans-serif;">Contact</span>
<span id="t73" style="left:684px;top:1580.00px;font-size:14.25px;line-height:14.25px;font-weight:700;color:#3d3d3d;font-style:normal;letter-spacing:-0.051px;font-family:'Liberation Mono', monospace;">WARNING</span>
<span id="t74" style="left:659px;top:1603.00px;font-size:13.02px;line-height:13.02px;font-weight:400;color:#3d3d3d;font-style:normal;letter-spacing:-0.107px;font-family:'Liberation Sans', sans-serif;">This is a U.S. General Services Administration Federal Government computer system that is</span>
<span id="t75" style="left:1185px;top:1603.00px;font-size:13.02px;line-height:13.02px;font-weight:700;color:#1b1b1b;font-style:normal;letter-spacing:-0.626px;font-family:'Liberation Sans', sans-serif;">"FOR OFFICIAL USE ONLY."</span>
<span id="t76" style="left:1350px;top:1603.00px;font-size:13.02px;line-height:13.02px;font-weight:400;color:#3d3d3d;font-style:normal;letter-spacing:-0.303px;font-family:'Liberation Sans', sans-serif;">This system is</span>
<span id="t77" style="left:659px;top:1621.00px;font-size:13.02px;line-height:13.02px;font-weight:400;color:#3d3d3d;font-style:normal;letter-spacing:0.157px;font-family:'Liberation Sans', sans-serif;">subject to monitoring. Individuals found performing unauthorized activities are subject to disciplinary action including criminal</span>
<span id="t78" style="left:659px;top:1638.00px;font-size:13.02px;line-height:13.02px;font-weight:400;color:#3d3d3d;font-style:normal;letter-spacing:0.246px;font-family:'Liberation Sans', sans-serif;">prosecution.</span>
<span id="t79" style="left:659px;top:1675.00px;font-size:13.02px;line-height:13.02px;font-weight:400;color:#3d3d3d;font-style:normal;letter-spacing:0.051px;font-family:'Liberation Sans', sans-serif;">This system contains Controlled Unclassified Information (CUI). All individuals viewing, reproducing or disposing of this information are</span>
<span id="t80" style="left:659px;top:1693.00px;font-size:13.02px;line-height:13.02px;font-weight:400;color:#3d3d3d;font-style:normal;letter-spacing:-0.208px;font-family:'Liberation Sans', sans-serif;">required to protect it in accordance with 32 CFR Part 2002 and GSA Order CIO 2103.2 CUI Policy.</span>
<span id="t81" style="left:480px;top:1749.00px;font-size:22.32px;line-height:22.32px;font-weight:400;color:#fff;font-style:normal;letter-spacing:-0.895px;font-family:'Liberation Sans', sans-serif;-webkit-text-stroke:0.7px #fff">SAM.gov</span>
<span id="t82" style="left:480px;top:1780.00px;font-size:22.32px;line-height:22.32px;font-weight:400;color:#fff;font-style:normal;letter-spacing:0.027px;font-family:'Liberation Sans', sans-serif;-webkit-text-stroke:0.7px #fff">An official website of the U.S. General Services Administration</span>
</body></html>
